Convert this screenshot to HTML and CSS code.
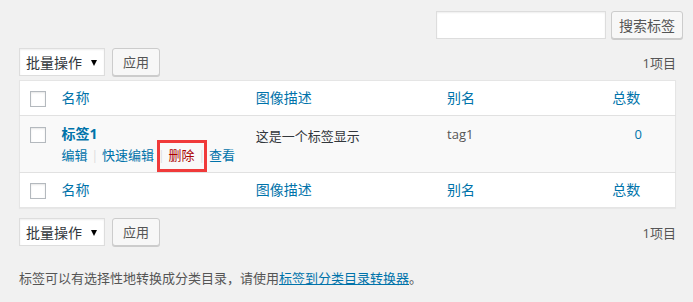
FILE: index.html
```html
<!DOCTYPE html>
<html>
<head>
	<meta charset="utf-8">
	<title>标签</title>
	<link rel="stylesheet" href="styles.css">
</head>
<body>

	<div class="wrap">
		<div class="search-box">
			<input type="search" class="search-input">
			<button class="button">搜索标签</button>
		</div>

		<div class="tablenav top">
			<span class="bulk-select">批量操作</span>
			<button class="button">应用</button>
			<span class="num-items">1项目</span>
		</div>

		<table class="tags-table">
			<colgroup>
				<col class="col-cb">
				<col class="col-name">
				<col class="col-desc">
				<col class="col-slug">
				<col class="col-posts">
			</colgroup>
			<thead>
				<tr>
					<th class="check-column"><span class="checkbox"></span></th>
					<th><a href="#">名称</a></th>
					<th><a href="#">图像描述</a></th>
					<th><a href="#">别名</a></th>
					<th class="posts-head"><a href="#">总数</a></th>
				</tr>
			</thead>
			<tbody>
				<tr>
					<td class="check-column"><span class="checkbox"></span></td>
					<td>
						<a href="#" class="row-title">标签1</a>
						<div class="row-actions"><a href="#">编辑</a><span class="sep">|</span><a href="#">快速编辑</a><span class="sep">|</span><a href="#" class="delete">删除</a><span class="sep">|</span><a href="#">查看</a></div>
					</td>
					<td class="desc">这是一个标签显示</td>
					<td class="slug">tag1</td>
					<td class="posts"><a href="#">0</a></td>
				</tr>
			</tbody>
			<tfoot>
				<tr>
					<th class="check-column"><span class="checkbox"></span></th>
					<th><a href="#">名称</a></th>
					<th><a href="#">图像描述</a></th>
					<th><a href="#">别名</a></th>
					<th class="posts-head"><a href="#">总数</a></th>
				</tr>
			</tfoot>
		</table>

		<div class="tablenav bottom">
			<span class="bulk-select">批量操作</span>
			<button class="button">应用</button>
			<span class="num-items">1项目</span>
		</div>

		<p class="note">标签可以有选择性地转换成分类目录，请使用<a href="#">标签到分类目录转换器</a>。</p>
	</div>

</body>
</html>
```

FILE: styles.css
```css
body{
	margin: 0;
	background: #f1f1f1;
	font-family: "Open Sans", "Noto Sans CJK SC", sans-serif;
	font-size: 13px;
	color: #444;
}

a{
	color: #0073aa;
	text-decoration: none;
}

.wrap{
	width: 657px;
	padding: 11px 0 0 19px;
}

/* search */
.search-box{
	display: flex;
	justify-content: flex-end;
	gap: 5px;
	margin-right: -7px;
	height: 28px;
}

.search-input{
	box-sizing: border-box;
	width: 170px;
	height: 28px;
	margin: 0;
	border: 1px solid #ddd;
	box-shadow: inset 0 1px 2px rgba(0,0,0,.07);
	background: #fff;
}

.button{
	box-sizing: border-box;
	height: 28px;
	margin: 0;
	padding: 0 10px;
	background: #f7f7f7;
	border: 1px solid #ccc;
	border-radius: 3px;
	box-shadow: 0 1px 0 #ccc;
	color: #555;
	font-family: "Noto Sans CJK SC", sans-serif;
	font-size: 13px;
	line-height: 26px;
}

.search-box .button{
	width: 72px;
	font-size: 14px;
	padding: 0;
}

/* table nav */
.tablenav{
	display: flex;
	align-items: center;
	gap: 7px;
	height: 28px;
}

.tablenav.top{
	margin-top: 9px;
	margin-bottom: 4px;
}

.tablenav.bottom{
	margin-top: 10px;
}

.tablenav .button{
	width: 48px;
	padding: 0;
}

.bulk-select{
	position: relative;
	box-sizing: border-box;
	width: 86px;
	height: 28px;
	padding-left: 6px;
	background: #fff;
	border: 1px solid #ddd;
	box-shadow: inset 0 1px 2px rgba(0,0,0,.07);
	color: #32373c;
	font-family: "Noto Sans CJK SC", sans-serif;
	font-size: 14px;
	line-height: 26px;
}

.bulk-select::after{
	content: "";
	position: absolute;
	right: 7px;
	top: 11px;
	border-left: 3.5px solid transparent;
	border-right: 3.5px solid transparent;
	border-top: 6px solid #000;
}

.num-items{
	margin-left: auto;
	color: #555;
	font-size: 13px;
}

/* table */
.tags-table{
	width: 657px;
	table-layout: fixed;
	border-collapse: collapse;
	border: 1px solid #e5e5e5;
	background: #fff;
	box-shadow: 0 1px 1px rgba(0,0,0,.04);
}

.col-cb{ width: 32px; }
.col-name{ width: 194px; }
.col-desc{ width: 191px; }
.col-slug{ width: 164px; }
.col-posts{ width: 74px; }

.tags-table th{
	height: 34px;
	padding: 0 10px;
	text-align: left;
	font-weight: normal;
	font-size: 14px;
	line-height: 20px;
	vertical-align: middle;
}

.tags-table thead tr{
	border-bottom: 1px solid #e1e1e1;
}

.tags-table tfoot tr{
	border-top: 1px solid #e1e1e1;
}

.tags-table th.check-column{
	padding: 0 0 0 10px;
}

.tags-table th.check-column .checkbox{
	margin-top: 1px;
}

.tags-table th.posts-head{
	padding-left: 11px;
}

.checkbox{
	display: block;
	box-sizing: border-box;
	width: 16px;
	height: 16px;
	border: 1px solid #b4b9be;
	background: #fff;
	box-shadow: inset 0 1px 2px rgba(0,0,0,.1);
}

.tags-table tbody tr{
	height: 57px;
	background: #f9f9f9;
}

.tags-table td{
	padding: 8px 10px 0;
	vertical-align: top;
	font-size: 13px;
	line-height: 20px;
	color: #32373c;
}

.tags-table td.check-column{
	padding: 11px 0 0 10px;
}

.row-title{
	display: block;
	font-size: 14px;
	font-weight: bold;
	line-height: 20px;
}

.row-actions{
	margin-top: 1px;
	height: 20px;
	white-space: nowrap;
	font-size: 13px;
}

.row-actions a,
.row-actions .sep{
	display: inline-block;
	vertical-align: top;
	line-height: 20px;
}

.row-actions .sep{
	width: 14.5px;
	text-align: center;
	color: #ddd;
}

.row-actions .delete{
	position: relative;
	color: #a00;
}

.row-actions .delete::before{
	content: "";
	position: absolute;
	left: -12px;
	right: -12px;
	top: -5px;
	bottom: -7px;
	border: 3px solid #f03a3a;
}

.desc{
	padding-top: 10px !important;
}

.slug{
	color: #555 !important;
}

.posts{
	text-align: center;
}

/* footer note */
.note{
	margin: 22px 0 0;
	color: #555;
	font-family: "Noto Sans CJK SC", sans-serif;
	font-size: 13px;
	line-height: 20px;
}

.note a{
	text-decoration: underline;
}
```
